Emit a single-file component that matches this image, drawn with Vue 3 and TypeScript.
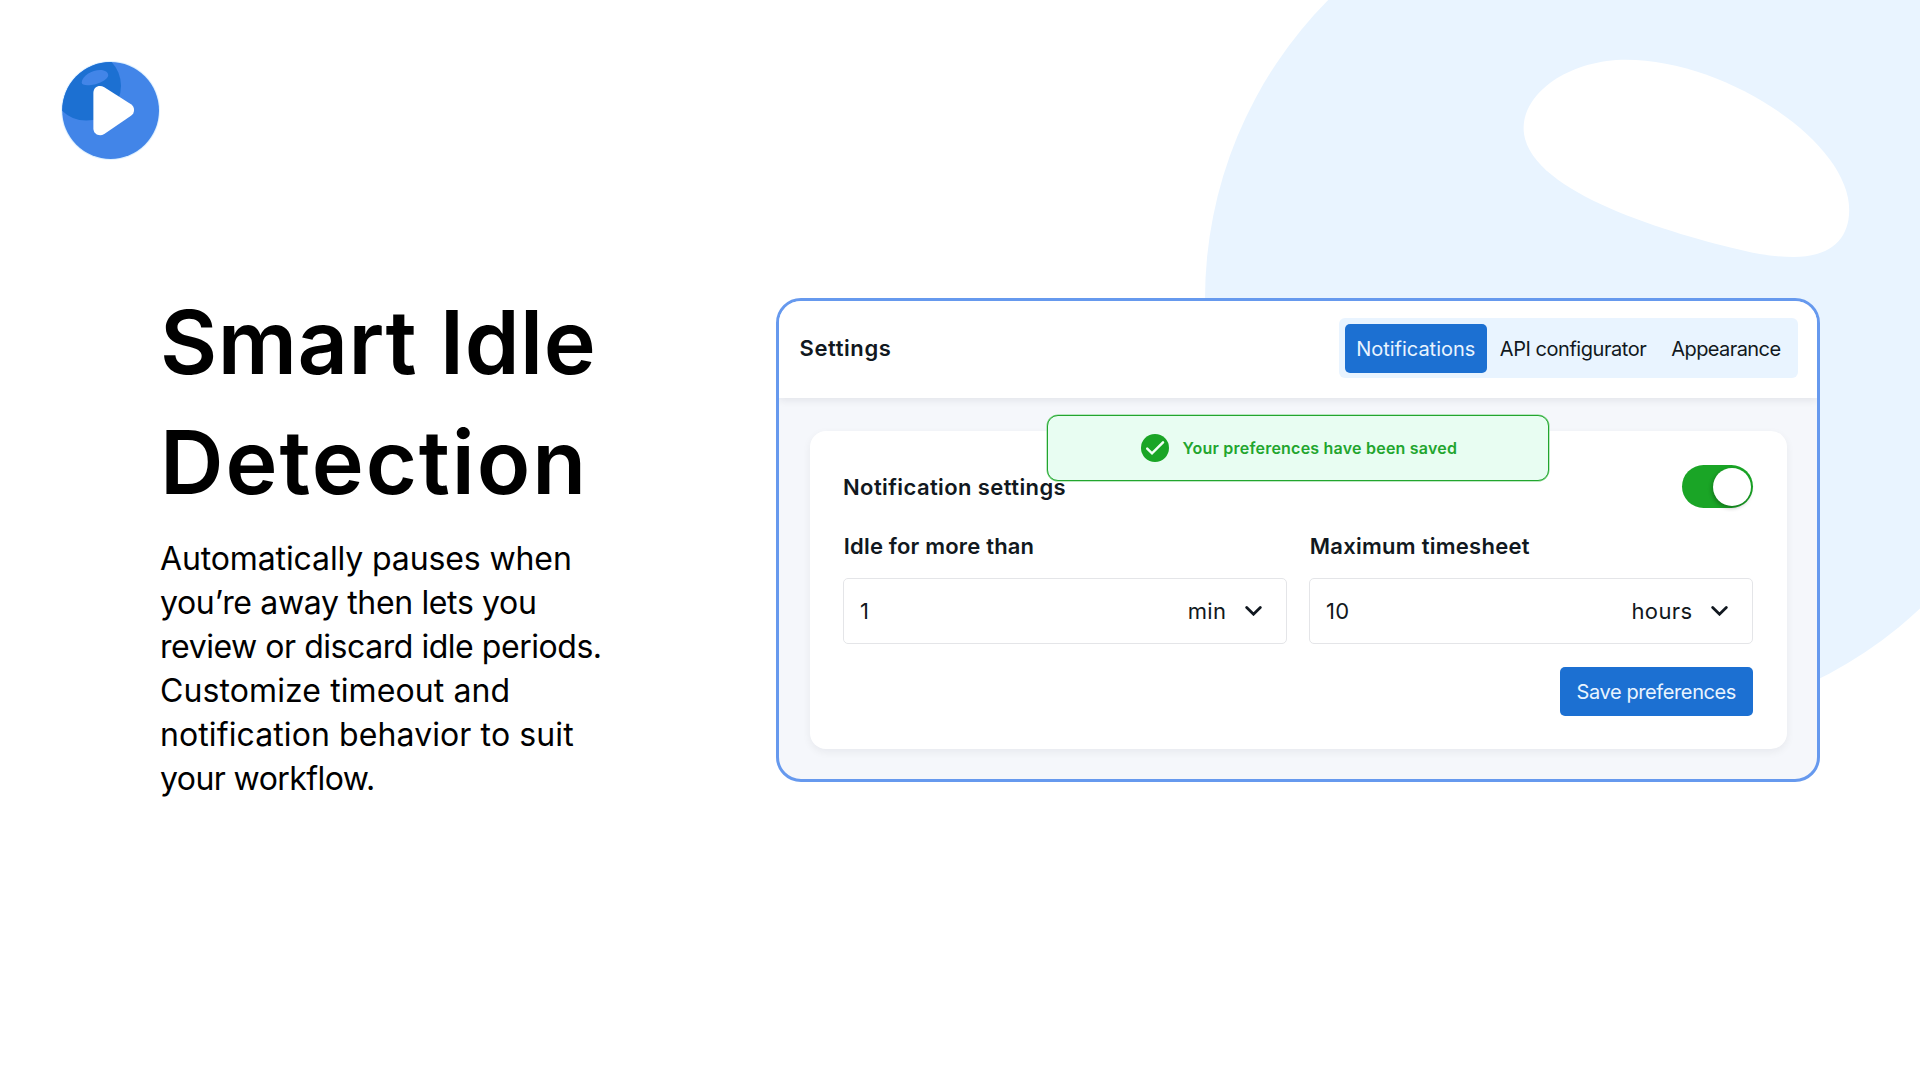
<script setup lang="ts">
import { ref } from 'vue'

interface Line {
  text: string
  spacing: number
  indent?: number
}

const title: Line[] = [
  { text: 'Smart Idle', spacing: 0.51 },
  { text: 'Detection', spacing: 1.95 },
]

const lead: Line[] = [
  { text: 'Automatically pauses when', spacing: -0.12 },
  { text: 'you’re away then lets you', spacing: -0.35 },
  { text: 'review or discard idle periods.', spacing: -0.46 },
  { text: 'Customize timeout and', spacing: 0.1 },
  { text: 'notification behavior to suit', spacing: 0.1 },
  { text: 'your workflow.', spacing: -0.58 },
]

const tabs = [
  { label: 'Notifications', spacing: -0.01 },
  { label: 'API configurator', spacing: -0.46 },
  { label: 'Appearance', spacing: -0.58 },
]
const activeTab = ref('Notifications')

const fields = [
  { label: 'Idle for more than', labelSpacing: 0.18, value: '1', unit: 'min' },
  { label: 'Maximum timesheet', labelSpacing: 0.26, value: '10', unit: 'hours' },
]

const enabled = ref(true)

const lineStyle = (line: Line) => ({
  letterSpacing: `${line.spacing}px`,
})
</script>

<template>
  <main class="slide">
    <svg class="backdrop" viewBox="0 0 1920 1080" aria-hidden="true">
      <circle cx="1629.500" cy="299" r="424.500" fill="#e9f4ff" />
      <path
        d="M1523.6 128C1523.6 92 1570 59.8 1626 59.8C1725 59.8 1849.2 141 1849.2 210C1849.2 241 1828 257 1793.5 257C1777 257 1760 254.5 1746.3 251.3C1668 233 1523.6 191 1523.6 128Z"
        fill="#fff"
      />
    </svg>

    <svg class="logo" viewBox="0 0 100 100" aria-hidden="true">
      <defs>
        <clipPath id="logo-disc"><circle cx="49.6" cy="49.5" r="48.4" /></clipPath>
      </defs>
      <circle cx="49.6" cy="49.5" r="49.4" fill="#dff1ff" />
      <circle cx="49.6" cy="49.5" r="48.4" fill="#4285e8" />
      <g clip-path="url(#logo-disc)">
        <circle cx="25.2" cy="24.8" r="34.8" fill="#1c70d2" />
        <path d="M20.700 21.500C20.700 15 31 8.900 39.200 8.900C44.200 8.900 47.200 11.200 47.200 14.200C47.200 18.700 35.700 24.300 26.700 24.300C22.700 24.300 20.700 23.300 20.700 21.500Z" fill="#4285e8" />
      </g>
      <path d="M32.4 31.7C32.4 26 38.200 23.100 43.300 26.300L70 43.300C74.100 46 74.100 52 70 54.800L43.300 73C38.200 76.100 32.400 73 32.400 67.500Z" fill="#fff" />
    </svg>

    <div class="content">
      <section class="intro">
        <h1 class="title">
          <span v-for="line in title" :key="line.text" class="line" :style="lineStyle(line)">{{ line.text }}</span>
        </h1>
        <p class="lead">
          <span v-for="line in lead" :key="line.text" class="line" :style="lineStyle(line)">{{ line.text }}</span>
        </p>
      </section>

      <section class="panel">
        <header class="panel-header">
          <h2 class="panel-title">Settings</h2>
          <nav class="tabs">
            <button
              v-for="tab in tabs"
              :key="tab.label"
              type="button"
              class="tab"
              :class="{ active: tab.label === activeTab }"
              :style="{ letterSpacing: `${tab.spacing}px` }"
              @click="activeTab = tab.label"
            >{{ tab.label }}</button>
          </nav>
        </header>

        <div class="panel-body">
          <div class="card">
            <div class="card-head">
              <h3 class="card-title">Notification settings</h3>
              <button
                type="button"
                class="toggle"
                :class="{ on: enabled }"
                role="switch"
                :aria-checked="enabled"
                @click="enabled = !enabled"
              ><span class="knob"></span></button>
            </div>

            <div class="fields">
              <div v-for="field in fields" :key="field.label" class="field">
                <span class="label" :style="{ letterSpacing: `${field.labelSpacing}px` }">{{ field.label }}</span>
                <div class="box">
                  <span class="value">{{ field.value }}</span>
                  <span class="unit">{{ field.unit }}</span>
                  <svg class="chevron" viewBox="0 0 17 10" aria-hidden="true">
                    <path d="M1.700 1.600L8.500 8.200L15.300 1.600" fill="none" stroke="#111820" stroke-width="2.800" stroke-linecap="round" />
                  </svg>
                </div>
              </div>
            </div>

            <button type="button" class="save">Save preferences</button>
          </div>
        </div>

        <div class="toast" role="status">
          <svg class="check" viewBox="0 0 28 28" aria-hidden="true">
            <circle cx="14" cy="14" r="14" fill="#1aa526" />
            <path d="M6.200 14.700L11 19.300L22 8.300" fill="none" stroke="#f2fff6" stroke-width="2.500" stroke-linecap="round" />
          </svg>
          <span>Your preferences have been saved</span>
        </div>
      </section>
    </div>
  </main>
</template>

<style>
body {
  margin: 0;
  background: #fff;
}
</style>

<style scoped>
.slide {
  position: relative;
  box-sizing: border-box;
  width: 1920px;
  height: 1080px;
  padding: 61px 100px 0 61px;
  overflow: hidden;
  background: #fff;
  color: #000;
  font-family: Inter, 'Liberation Sans', sans-serif;
}

h1,
h2,
h3,
p {
  margin: 0;
}

button {
  padding: 0;
  border: 0;
  font: inherit;
}

.backdrop {
  position: absolute;
  inset: 0;
  width: 1920px;
  height: 1080px;
}

.logo {
  position: relative;
  display: block;
  width: 100px;
  height: 100px;
  overflow: visible;
}

.content {
  position: relative;
  display: flex;
  justify-content: space-between;
  align-items: flex-start;
  margin: 121px 0 0 99px;
}

.intro {
  width: 500px;
}

.line {
  display: block;
  white-space: nowrap;
}

.title {
  font-size: 88px;
  font-weight: 600;
  line-height: 120px;
}

.lead {
  margin-top: 15px;
  font-size: 32px;
  line-height: 44px;
}

.panel {
  position: relative;
  display: flex;
  flex-direction: column;
  box-sizing: border-box;
  width: 1044px;
  height: 484px;
  margin-top: 16px;
  overflow: hidden;
  border: 3px solid #6699ee;
  border-radius: 25px;
  background: #f5f7fb;
  color: #111820;
}

.panel-header {
  position: relative;
  display: flex;
  align-items: center;
  justify-content: space-between;
  box-sizing: border-box;
  height: 97px;
  padding: 0 19.5px 3px 20.5px;
  background: #fff;
  box-shadow: 0 2px 8px rgba(20, 24, 40, 0.09);
}

.panel-title {
  font-size: 22px;
  font-weight: 600;
  letter-spacing: 0.59px;
}

.tabs {
  display: flex;
  align-items: center;
  gap: 1px;
  box-sizing: border-box;
  height: 60px;
  padding: 0 5px 0 6px;
  border-radius: 6px;
  background: #e9f4ff;
}

.tab {
  height: 49px;
  padding: 1px 12px 0;
  border-radius: 5px;
  background: transparent;
  color: #111820;
  font-size: 20px;
  white-space: nowrap;
}

.tab.active {
  padding: 1px 11.500px 0;
  background: #1c70d2;
  color: #e9f4ff;
}

.panel-body {
  flex: 1;
  padding: 33px 30.500px 30px;
}

.card {
  display: flex;
  flex-direction: column;
  box-sizing: border-box;
  height: 318px;
  padding: 34px 33.500px 0;
  border-radius: 16px;
  background: #fff;
  box-shadow: 0 3px 9px rgba(20, 24, 40, 0.06);
}

.card-head {
  display: flex;
  align-items: center;
  justify-content: space-between;
  height: 43px;
}

.card-title {
  font-size: 22px;
  font-weight: 600;
  letter-spacing: 0.4px;
}

.toggle {
  display: flex;
  align-items: center;
  box-sizing: border-box;
  width: 71px;
  height: 43px;
  padding: 0 2.500px;
  border-radius: 22px;
  background: #b8bec6;
}

.toggle.on {
  justify-content: flex-end;
  background: #1aa526;
}

.knob {
  width: 38px;
  height: 38px;
  border-radius: 50%;
  background: #fff;
  box-shadow: -1px 2px 4px rgba(0, 0, 0, 0.3);
}

.fields {
  display: flex;
  gap: 22px;
  margin-top: 23px;
}

.field {
  display: flex;
  flex: 1;
  flex-direction: column;
  gap: 17px;
}

.label {
  padding-left: 0.8px;
  font-size: 22px;
  font-weight: 600;
  line-height: 30px;
}

.box {
  display: flex;
  align-items: center;
  box-sizing: border-box;
  height: 66px;
  padding: 0 24px 0 16px;
  border: 1px solid #e4e5e8;
  border-radius: 5px;
  font-size: 22px;
  letter-spacing: 0.4px;
}

.unit {
  margin-left: auto;
}

.chevron {
  width: 17px;
  height: 10px;
  margin-left: 18.5px;
}

.save {
  align-self: flex-end;
  width: 193.500px;
  height: 49px;
  margin-top: 22.500px;
  padding-top: 1px;
  border-radius: 5px;
  background: #1c70d2;
  color: #e9f4ff;
  font-size: 20px;
  letter-spacing: -0.39px;
  white-space: nowrap;
}

.toast {
  position: absolute;
  top: 114px;
  left: 268px;
  display: flex;
  align-items: center;
  gap: 14px;
  box-sizing: border-box;
  width: 502px;
  height: 66px;
  padding-left: 92.500px;
  border: 1px solid #22a52e;
  border-radius: 11px;
  background: #e8fdf2;
  box-shadow: 0 0 0 0.5px #7fd487;
  color: #22a52e;
  font-size: 16px;
  font-weight: 600;
  letter-spacing: 0.22px;
  white-space: nowrap;
}

.check {
  width: 28px;
  height: 28px;
  margin-top: -1px;
}
</style>
